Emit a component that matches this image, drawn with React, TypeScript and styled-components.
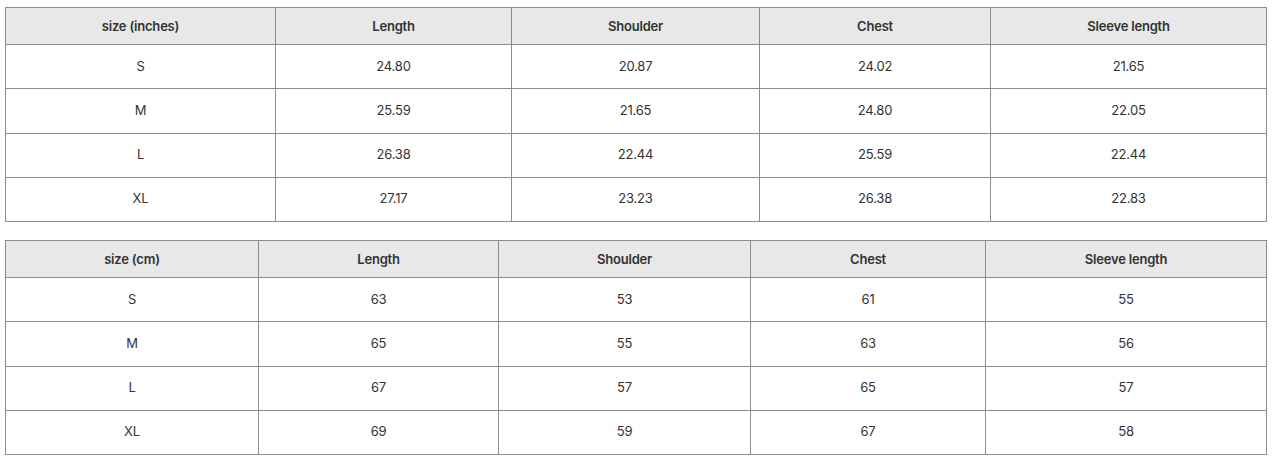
import React from "react";
import styled, { createGlobalStyle } from "styled-components";

const Global = createGlobalStyle`
  html, body { margin: 0; padding: 0; background: #fff; }
  body { font-family: Inter, "Liberation Sans", Arial, sans-serif; }
`;

const Page = styled.div`
  display: flex;
  flex-direction: column;
  gap: 18px;
  padding: 7px 5px 0 5px;
  width: 1261px;
`;

const Table = styled.table`
  width: 1261px;
  border-collapse: collapse;
  table-layout: fixed;
  font-size: 13px;
  color: #333;
`;

const HeadCell = styled.th`
  height: 36px;
  padding: 0 8px;
  background: #e8e8e8;
  border: 1px solid #8c8c8c;
  font-weight: 600;
  text-align: center;
  vertical-align: middle;
  letter-spacing: -0.2px;
`;

const Cell = styled.td`
  height: 41.25px;
  padding: 0 8px 2px 8px;
  border: 1px solid #8c8c8c;
  text-align: center;
  vertical-align: middle;
  font-weight: 400;
  letter-spacing: -0.2px;
`;

type SizeTable = {
  title: string;
  widths: number[];
  rows: [string, string, string, string, string][];
};

const tables: SizeTable[] = [
  {
    title: "size (inches)",
    widths: [270, 236, 248, 231, 276],
    rows: [
      ["S", "24.80", "20.87", "24.02", "21.65"],
      ["M", "25.59", "21.65", "24.80", "22.05"],
      ["L", "26.38", "22.44", "25.59", "22.44"],
      ["XL", "27.17", "23.23", "26.38", "22.83"],
    ],
  },
  {
    title: "size (cm)",
    widths: [253, 240, 252, 235, 281],
    rows: [
      ["S", "63", "53", "61", "55"],
      ["M", "65", "55", "63", "56"],
      ["L", "67", "57", "65", "57"],
      ["XL", "69", "59", "67", "58"],
    ],
  },
];

export default function App() {
  return (
    <>
      <Global />
      <Page>
        {tables.map((t) => (
          <Table key={t.title}>
            <colgroup>
              {t.widths.map((w, i) => (
                <col key={i} style={{ width: w }} />
              ))}
            </colgroup>
            <thead>
              <tr>
                <HeadCell>{t.title}</HeadCell>
                <HeadCell>Length</HeadCell>
                <HeadCell>Shoulder</HeadCell>
                <HeadCell>Chest</HeadCell>
                <HeadCell>Sleeve length</HeadCell>
              </tr>
            </thead>
            <tbody>
              {t.rows.map((r) => (
                <tr key={r[0]}>
                  {r.map((v, i) => (
                    <Cell key={i}>{v}</Cell>
                  ))}
                </tr>
              ))}
            </tbody>
          </Table>
        ))}
      </Page>
    </>
  );
}
